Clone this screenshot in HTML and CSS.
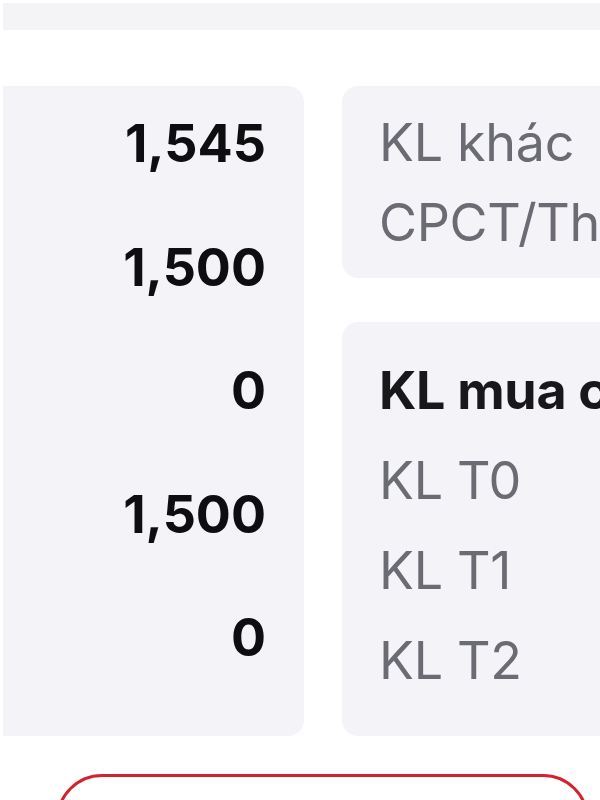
FILE: index.html
```html
<!DOCTYPE html>
<html lang="vi">
<head>
    <meta charset="UTF-8">
    <meta name="viewport" content="width=device-width, initial-scale=1.0">
    <title>Chi tiết khối lượng</title>
    <link rel="stylesheet" href="styles.css">
</head>
<body>

    <div class="top-strip"></div>

    <div class="detail-grid">
        <!-- So lieu -->
        <div class="card value-card">
            <div class="value">1,545</div>
            <div class="value">1,500</div>
            <div class="value">0</div>
            <div class="value">1,500</div>
            <div class="value">0</div>
        </div>

        <div class="side-column">
            <div class="card label-card">
                <div class="label">KL khác</div>
                <div class="label">CPCT/Thưởng</div>
            </div>

            <div class="card label-card pending">
                <div class="label title">KL mua chờ về</div>
                <div class="label">KL T0</div>
                <div class="label">KL T1</div>
                <div class="label">KL T2</div>
            </div>
        </div>
    </div>

    <!-- nut dong, chu nam duoi mep man hinh -->
    <div class="actions">
        <button class="outline-btn" type="button" aria-label="Đóng"></button>
    </div>

</body>
</html>
```

FILE: styles.css
```css
body {
    margin: 0;
    background-color: #ffffff;
    font-family: Inter, "Noto Sans", sans-serif;
    overflow: hidden;
    padding-left: 3px;
}

.top-strip {
    margin-top: 3px;
    height: 27px;
    background-color: #f4f4f6;
}

.detail-grid {
    display: grid;
    grid-template-columns: 301px 320px;
    column-gap: 38px;
    margin-top: 56px;
    width: 700px;
}

.card {
    background-color: #f4f4f8;
    border-radius: 16px;
}

.value-card {
    border-radius: 0 16px 16px 0;
    display: flex;
    flex-direction: column;
    align-items: flex-end;
    gap: 61px;
    padding: 27px 38px 66px 0;
}

.value {
    font-size: 52px;
    font-weight: 700;
    line-height: 62.5px;
    color: #0e0e10;
}

.side-column {
    display: flex;
    flex-direction: column;
    gap: 44px;
}

.label-card {
    padding: 17px 0 15px 37px;
    white-space: nowrap;
    overflow: hidden;
}

.label-card .label {
    font-size: 52px;
    line-height: 80px;
    letter-spacing: -0.3px;
    color: #6b6b73;
}

.label-card.pending {
    flex: 1;
    padding: 24px 0 29px 37px;
}

.label-card.pending .label {
    line-height: 90px;
}

.label-card .title {
    font-weight: 700;
    color: #18181b;
}

.actions {
    margin-top: 38px;
    padding-left: 53px;
}

.outline-btn {
    width: 533px;
    height: 96px;
    border: 3px solid #d3232f;
    border-radius: 46px;
    background-color: #ffffff;
}
```
